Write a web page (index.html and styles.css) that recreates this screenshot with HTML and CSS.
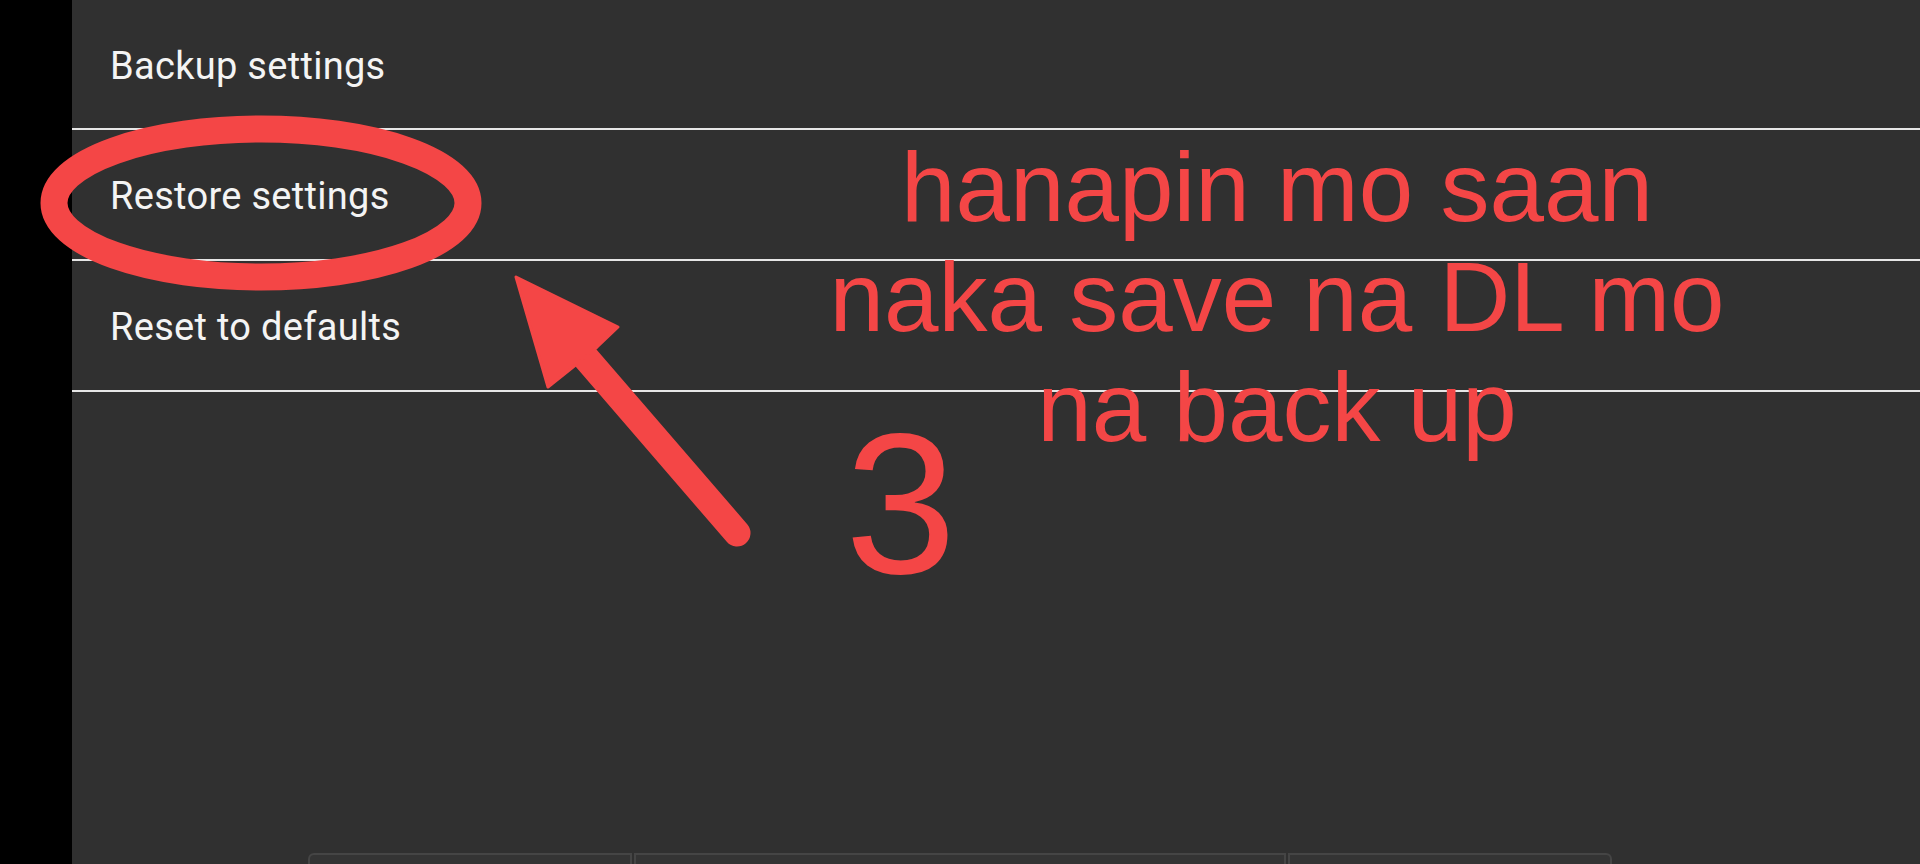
FILE: index.html
```html
<!DOCTYPE html>
<html lang="en">
<head>
  <meta charset="UTF-8">
  <meta name="viewport" content="width=device-width, initial-scale=1.0">
  <title>Settings</title>
  <link rel="stylesheet" href="styles.css">
</head>
<body>
  <div class="screen">
    <aside class="edge"></aside>
    <main class="prefs">
      <ul class="list">
        <li class="item">Backup settings</li>
        <li class="item">Restore settings</li>
        <li class="item">Reset to defaults</li>
      </ul>
      <div class="tabs">
        <span class="tab"></span>
        <span class="tab"></span>
        <span class="tab"></span>
      </div>
    </main>
  </div>

  <!-- markup drawn on top of the screen -->
  <div class="marks">
    <svg class="draw" width="1920" height="864" viewBox="0 0 1920 864">
      <ellipse cx="261" cy="203" rx="207" ry="74" fill="none" stroke="#f44646" stroke-width="27"/>
      <line x1="586" y1="358" x2="737" y2="533" stroke="#f44646" stroke-width="27" stroke-linecap="round"/>
      <polygon points="516,277 618,327 597,347 573,367 548,387" fill="#f44646" stroke="#f44646" stroke-width="3" stroke-linejoin="round"/>
    </svg>
    <div class="step">3</div>
    <p class="note">hanapin mo saan<br>naka save na DL mo<br>na back up</p>
  </div>
</body>
</html>
```

FILE: styles.css
```css
* {
  padding: 0;
  margin: 0;
  box-sizing: border-box;
}
body {
  width: 1920px;
  height: 864px;
  overflow: hidden;
  background-color: #303030;
  position: relative;
}
.screen {
  display: flex;
  height: 100%;
}
.edge {
  width: 72px;
  background-color: #000;
}
.prefs {
  flex: 1;
  display: flex;
  flex-direction: column;
}
.list {
  list-style: none;
}
.item {
  height: 131px;
  padding: 44px 0 0 38px;
  border-bottom: 2px solid #e6e6e6;
  font-family: Roboto, "Noto Sans", sans-serif;
  font-size: 38px;
  letter-spacing: 0.3px;
  line-height: 44px;
  color: #f4f4f4;
}
.item:first-child {
  height: 130px;
}
.tabs {
  margin-top: auto;
  margin-left: 236px;
  width: 1304px;
  height: 11px;
  display: grid;
  grid-template-columns: 324px 654px 326px;
}
.tab {
  border: 2px solid #454545;
  border-bottom: none;
  background-color: #343434;
}
.tab:first-child {
  border-top-left-radius: 6px;
}
.tab:last-child {
  border-top-right-radius: 6px;
}
.tab + .tab {
  margin-left: 2px;
}
.marks {
  position: absolute;
  inset: 0;
  pointer-events: none;
}
.draw {
  position: absolute;
  left: 0;
  top: 0;
}
.step {
  position: absolute;
  left: 845px;
  top: 433px;
  font-family: "Liberation Sans", Arial, sans-serif;
  font-size: 200px;
  line-height: 142px;
  color: #f44646;
}
.note {
  position: absolute;
  left: 677px;
  top: 132px;
  width: 1200px;
  text-align: center;
  white-space: nowrap;
  font-family: "Liberation Sans", Arial, sans-serif;
  font-size: 98px;
  line-height: 110px;
  color: #f44646;
}
```
